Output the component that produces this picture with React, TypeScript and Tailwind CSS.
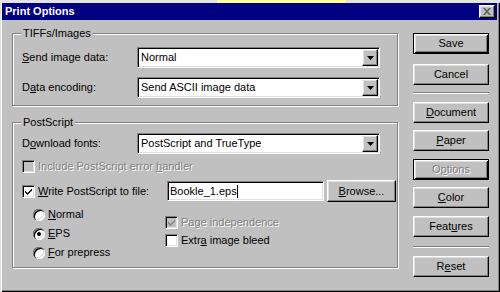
import React from 'react';

const raised =
  'border border-t-white border-l-white border-r-black border-b-black shadow-[inset_-1px_-1px_0_#808080,inset_1px_1px_0_#dfdfdf]';
const raisedDefault =
  'border border-black shadow-[inset_1px_1px_0_#fff,inset_-1px_-1px_0_#000,inset_2px_2px_0_#dfdfdf,inset_-2px_-2px_0_#808080]';
const sunken =
  'border border-t-[#808080] border-l-[#808080] border-r-white border-b-white shadow-[inset_1px_1px_0_#000,inset_-1px_-1px_0_#dfdfdf]';
const grayText = 'text-[#808080] [text-shadow:1px_1px_0_#fff]';

const U: React.FC<{ children: React.ReactNode }> = ({ children }) => (
  <span className="underline underline-offset-[1px]">{children}</span>
);

const Button: React.FC<{ children: React.ReactNode; def?: boolean; disabled?: boolean; className?: string }> = ({
  children,
  def,
  disabled,
  className = '',
}) => (
  <div
    className={`flex items-center justify-center bg-[#c0c0c0] ${def ? raisedDefault : raised} ${
      disabled ? grayText : 'text-black'
    } ${className}`}
  >
    {children}
  </div>
);

const Select: React.FC<{ value: string }> = ({ value }) => (
  <div className={`flex items-center w-[243px] h-[21px] bg-white ${sunken} pl-[3px] pr-[1px]`}>
    <span className="flex-1 truncate">{value}</span>
    <div className={`w-[16px] h-[17px] flex items-center justify-center bg-[#c0c0c0] ${raised}`}>
      <svg width="7" height="4" viewBox="0 0 7 4">
        <path d="M0 0h7L3.5 4z" fill="#000" />
      </svg>
    </div>
  </div>
);

const Check: React.FC<{ checked?: boolean; disabled?: boolean }> = ({ checked, disabled }) => (
  <div
    className={`w-[13px] h-[13px] shrink-0 flex items-center justify-center ${
      disabled ? 'bg-[#c0c0c0]' : 'bg-white'
    } ${sunken}`}
  >
    {checked && (
      <svg width="7" height="7" viewBox="0 0 7 7">
        <path d="M0 2.5l2.5 2.5L7 0.5v2L2.5 7 0 4.5z" fill={disabled ? '#808080' : '#000'} />
      </svg>
    )}
  </div>
);

const Radio: React.FC<{ checked?: boolean }> = ({ checked }) => (
  <div className="w-[12px] h-[12px] shrink-0 rounded-full bg-white flex items-center justify-center shadow-[inset_1px_1px_0_#808080,inset_2px_2px_0_#000,inset_-1px_-1px_0_#fff,inset_-2px_-2px_0_#dfdfdf]">
    {checked && <div className="w-[4px] h-[4px] rounded-full bg-black" />}
  </div>
);

const Group: React.FC<{ title: string; className?: string; children: React.ReactNode }> = ({
  title,
  className = '',
  children,
}) => (
  <div
    className={`relative w-[386px] border border-[#808080] shadow-[inset_1px_1px_0_#fff,1px_1px_0_#fff] ${className}`}
  >
    <span className="absolute left-[8px] -top-[7px] px-[2px] leading-[13px] bg-[#c0c0c0]">{title}</span>
    {children}
  </div>
);

export default function App() {
  return (
    <div
      className="w-[500px] h-[292px] bg-[#c0c0c0] text-black text-[11px] leading-[13px] overflow-hidden flex flex-col"
      style={{ fontFamily: '"Liberation Sans", Arial, sans-serif' }}
    >
      {/* strip above the window */}
      <div className="h-[3px] shrink-0 bg-[#e4e4e4] flex">
        <div className="ml-[217px] w-[129px] bg-[#ffff99]" />
      </div>

      <div className="flex-1 flex flex-col pl-[2px] pr-[3px] pb-[3px] shadow-[inset_1px_0_0_#dfdfdf,inset_2px_0_0_#fff,inset_-1px_-1px_0_#000,inset_-2px_-2px_0_#808080]">
        {/* title bar */}
        <div className="h-[17px] shrink-0 bg-[#000080] flex items-center justify-between pl-[3px] pr-[2px]">
          <span className="text-white font-bold text-[11px]">Print Options</span>
          <div className={`w-[16px] h-[13px] flex items-center justify-center bg-[#c0c0c0] ${raised}`}>
            <svg width="8" height="7" viewBox="0 0 8 7">
              <path d="M0 0h2l2 2.2L6 0h2L5 3.5 8 7H6L4 4.8 2 7H0l3-3.5z" fill="#606060" />
            </svg>
          </div>
        </div>

        <div className="flex pl-[10px] pt-[12px] mt-[1px]">
          {/* left column */}
          <div className="flex flex-col">
            <Group title="TIFFs/Images" className="h-[73px] pt-[13px] pl-[9px]">
              <div className="flex items-center h-[21px]">
                <span className="w-[115px]">
                  <U>S</U>end image data:
                </span>
                <Select value="Normal" />
              </div>
              <div className="flex items-center h-[21px] mt-[9px]">
                <span className="w-[115px]">
                  D<U>a</U>ta encoding:
                </span>
                <Select value="Send ASCII image data" />
              </div>
            </Group>

            <Group title="PostScript" className="h-[146px] mt-[16px] pt-[10px] pl-[9px]">
              <div className="flex items-center h-[21px]">
                <span className="w-[115px]">
                  D<U>o</U>wnload fonts:
                </span>
                <Select value="PostScript and TrueType" />
              </div>
              <div className="flex items-center h-[13px] mt-[6px]">
                <Check disabled />
                <span className={`ml-[3px] ${grayText}`}>
                  Include PostScript error <U>h</U>andler
                </span>
              </div>
              <div className="flex items-center h-[22px] mt-[7px]">
                <Check checked />
                <span className="ml-[3px] w-[129px]">
                  <U>W</U>rite PostScript to file:
                </span>
                <div className={`w-[157px] h-[20px] bg-white ${sunken} flex items-center pl-[2px]`}>
                  Bookle_1.eps
                  <span className="w-[1px] h-[13px] bg-black" />
                </div>
                <Button className="w-[69px] h-[22px] ml-[3px]">
                  <span>
                    <U>B</U>rowse...
                  </span>
                </Button>
              </div>
              <div className="flex mt-[6px]">
                <div className="flex flex-col gap-[6px] pl-[11px] w-[143px]">
                  <div className="flex items-center h-[13px] gap-[3px]">
                    <Radio />
                    <span>
                      <U>N</U>ormal
                    </span>
                  </div>
                  <div className="flex items-center h-[13px] gap-[3px]">
                    <Radio checked />
                    <span>
                      <U>E</U>PS
                    </span>
                  </div>
                  <div className="flex items-center h-[13px] gap-[3px]">
                    <Radio />
                    <span>
                      <U>F</U>or prepress
                    </span>
                  </div>
                </div>
                <div className="flex flex-col gap-[5px] mt-[8px]">
                  <div className="flex items-center h-[13px] gap-[3px]">
                    <Check checked disabled />
                    <span className={grayText}>
                      Pa<U>g</U>e independence
                    </span>
                  </div>
                  <div className="flex items-center h-[13px] gap-[3px]">
                    <Check />
                    <span>
                      Extr<U>a</U> image bleed
                    </span>
                  </div>
                </div>
              </div>
            </Group>
          </div>

          {/* right column */}
          <div className="flex flex-col ml-[15px] w-[76px]">
            <Button def className="h-[21px]">Save</Button>
            <Button className="h-[21px] mt-[10px]">Cancel</Button>
            <div className="h-[2px] mt-[7px] border-t border-[#808080] border-b border-b-white" />
            <Button className="h-[21px] mt-[8px]">
              <span>
                <U>D</U>ocument
              </span>
            </Button>
            <Button className="h-[21px] mt-[7px]">
              <span>
                <U>P</U>aper
              </span>
            </Button>
            <Button def disabled className="h-[21px] mt-[8px]">
              <span>
                O<U>p</U>tions
              </span>
            </Button>
            <Button className="h-[21px] mt-[7px]">
              <span>
                <U>C</U>olor
              </span>
            </Button>
            <Button className="h-[21px] mt-[8px]">
              <span>
                Feat<U>u</U>res
              </span>
            </Button>
            <div className="h-[2px] mt-[9px] border-t border-[#808080] border-b border-b-white" />
            <Button className="h-[21px] mt-[8px]">
              <span>
                R<U>e</U>set
              </span>
            </Button>
          </div>
        </div>
      </div>
    </div>
  );
}
